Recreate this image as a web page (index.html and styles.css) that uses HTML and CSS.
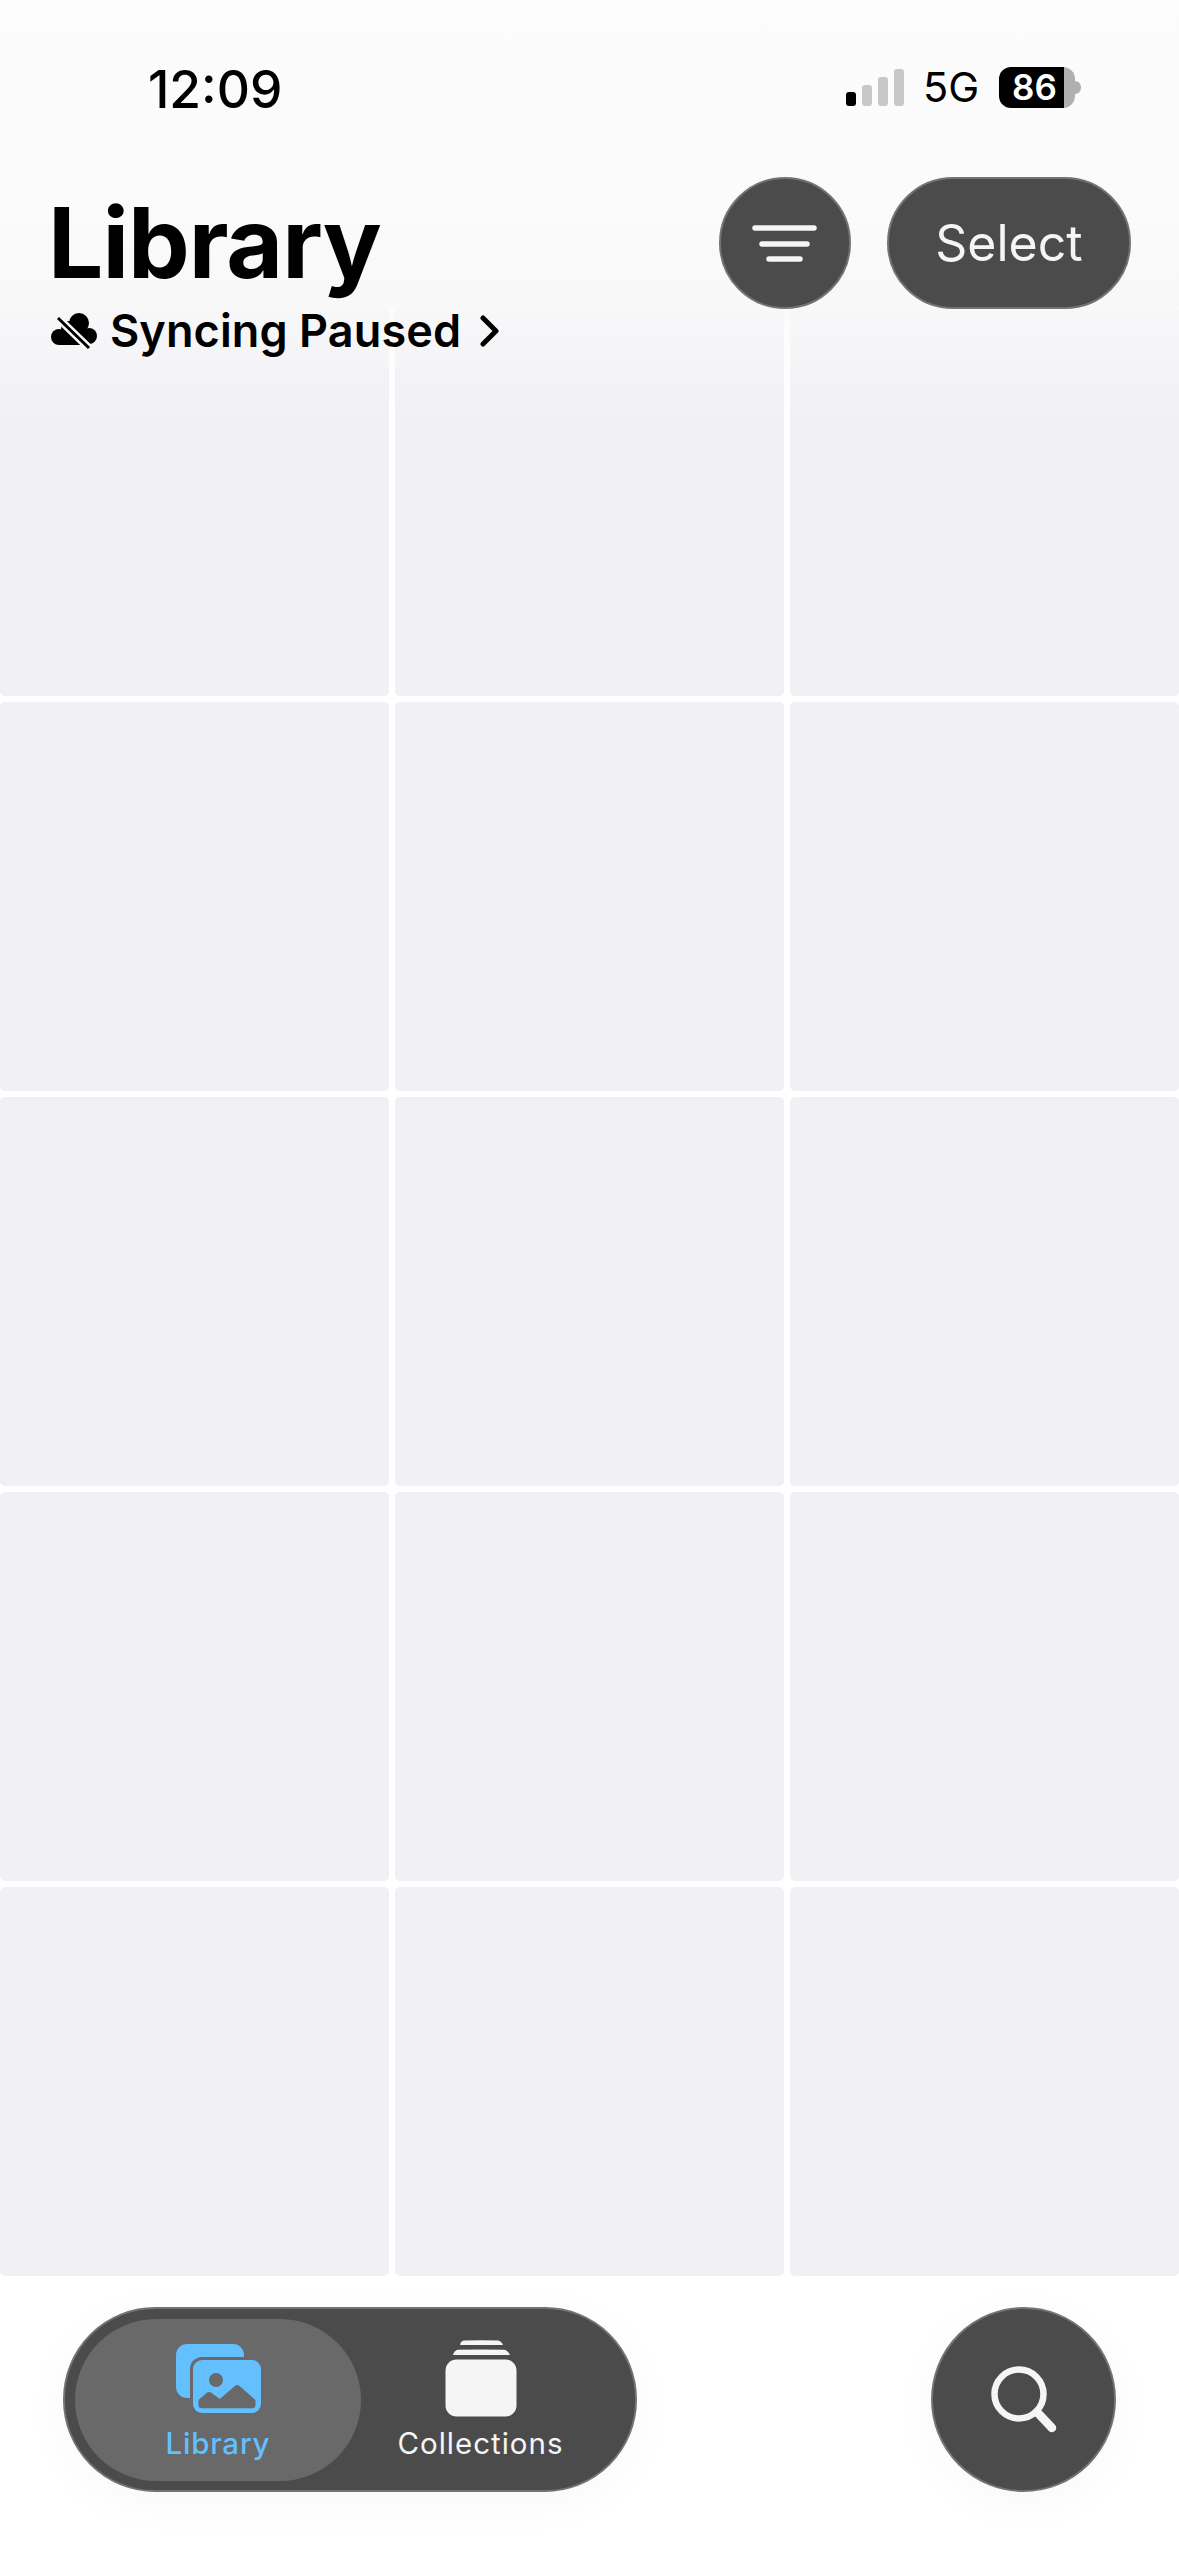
FILE: index.html
```html
<!DOCTYPE html>
<html lang="en">
<head>
<meta charset="utf-8">
<title>Library</title>
<link rel="stylesheet" href="styles.css">
</head>
<body>
<div class="screen">
  <header class="top">
    <div class="status">
      <span class="time">12:09</span>
      <div class="status-right">
        <div class="signal">
          <i class="bar b1 on"></i><i class="bar b2"></i><i class="bar b3"></i><i class="bar b4"></i>
        </div>
        <span class="net">5G</span>
        <div class="battery"><div class="cell"><span>86</span></div><i class="nub"></i></div>
      </div>
    </div>
    <div class="head">
      <div class="titles">
        <h1>Library</h1>
        <div class="sync">
          <svg class="cloud" viewBox="0 0 46 36" width="46" height="36">
            <g fill="#000"><circle cx="8" cy="24" r="8"/><circle cx="18" cy="16" r="8"/><circle cx="28" cy="10" r="10"/><circle cx="38" cy="23" r="8"/><rect x="8" y="18" width="30" height="14"/></g>
            <path d="M7 5 L38 35" stroke="#fafafa" stroke-width="8" fill="none"/>
            <path d="M7 5 L38 35" stroke="#000" stroke-width="3" fill="none"/>
          </svg>
          <span>Syncing Paused</span>
          <svg class="chev" viewBox="0 0 19 32" width="19" height="32"><path d="M3 3 L16 16 L3 29" fill="none" stroke="#000" stroke-width="5" stroke-linecap="round" stroke-linejoin="round"/></svg>
        </div>
      </div>
      <div class="actions">
        <button class="glass round filter" aria-label="Filter">
          <svg viewBox="0 0 65 37" width="65" height="37"><g stroke="#f5f5f5" stroke-width="5.5" stroke-linecap="round"><path d="M3 3H62"/><path d="M10 19H55"/><path d="M17 34H48"/></g></svg>
        </button>
        <button class="glass select">Select</button>
      </div>
    </div>
  </header>

  <main class="grid">
    <div class="fade"></div>
    <div class="tile"></div><div class="tile"></div><div class="tile"></div>
    <div class="tile"></div><div class="tile"></div><div class="tile"></div>
    <div class="tile"></div><div class="tile"></div><div class="tile"></div>
    <div class="tile"></div><div class="tile"></div><div class="tile"></div>
    <div class="tile"></div><div class="tile"></div><div class="tile"></div>
  </main>

  <footer class="bottom">
    <nav class="glass tabbar">
      <div class="tab active">
        <svg viewBox="0 0 85 69" width="85" height="69">
          <rect x="0" y="0" width="68" height="54" rx="11" fill="#64bfff"/>
          <rect x="14" y="13" width="73" height="60" rx="12" fill="#696969"/>
          <rect x="17" y="16" width="68" height="53" rx="9" fill="#64bfff"/>
          <circle cx="40" cy="36" r="7" fill="#696969"/>
          <path d="M22.5 56 L31 48.5 Q33 47.5 35 48.5 L43.7 55 L59.5 41.5 Q61.3 40.5 63 41.5 L79.5 56 V61 Q79.5 64.3 76 64.3 H26 Q22.5 64.3 22.5 61 Z" fill="#696969"/>
        </svg>
        <span>Library</span>
      </div>
      <div class="tab stack">
        <svg viewBox="0 0 72 77" width="72" height="77">
          <path d="M15 5 Q15.5 1 19 0.5 Q36 -0.2 53 0.5 Q56.5 1 58 5 Z" fill="#f5f5f5"/>
          <path d="M8 15 Q9 10.5 13 9.8 Q36 9 59 9.8 Q63 10.5 65 15 Z" fill="#f5f5f5"/>
          <rect x="0.5" y="19.5" width="71" height="57" rx="11" fill="#f5f5f5"/>
        </svg>
        <span>Collections</span>
      </div>
    </nav>
    <button class="glass search" aria-label="Search">
      <svg viewBox="0 0 66 67" width="66" height="67"><circle cx="28" cy="28" r="24.5" fill="none" stroke="#f5f5f5" stroke-width="6.5"/><path d="M46 46 L61 62" stroke="#f5f5f5" stroke-width="8.5" stroke-linecap="round"/></svg>
    </button>
  </footer>
</div>
</body>
</html>
```
FILE: styles.css
```css
* { box-sizing: border-box; }
html, body { margin: 0; padding: 0; background: #fff; }
body { font-family: Inter, "Liberation Sans", sans-serif; color: #000; }
.screen { width: 1179px; height: 2556px; overflow: hidden; display: flex; flex-direction: column; }

.top { height: 307px; flex: none; position: relative; z-index: 2; background: linear-gradient(#fcfcfc 0, #fbfbfb 200px, #f8f8f9 307px); }

.status { height: 177px; padding: 63px 98px 0 148px; display: flex; justify-content: space-between; align-items: flex-start; }
.time { font-size: 51.5px; line-height: 52px; font-weight: 500; }
.status-right { display: flex; align-items: center; height: 41px; margin-top: 4px; }
.signal { display: flex; align-items: flex-end; gap: 6px; height: 37px; width: 58px; }
.bar { width: 10px; border-radius: 3px; background: #c8c8c8; display: block; }
.bar.on { background: #000; }
.b1 { height: 14px; } .b2 { height: 21px; } .b3 { height: 29px; } .b4 { height: 37px; }
.net { font-size: 41.5px; line-height: 41px; margin-left: 19px; width: 55px; }
.battery { display: flex; align-items: center; margin-left: 21px; }
.cell { width: 76px; height: 41px; border-radius: 12px; background: linear-gradient(90deg, #000 65px, #b0b0b0 65px); color: #fff; font-size: 35px; font-weight: 600; line-height: 41px; padding-left: 13px; }
.nub { width: 6px; height: 13px; background: #b0b0b0; border-radius: 0 7px 7px 0; display: block; }

.head { display: flex; justify-content: space-between; padding: 0 48px 0 49px; }
.titles { display: flex; flex-direction: column; }
h1 { margin: 0 0 0 -1px; font-size: 98px; line-height: 132px; font-weight: 700; letter-spacing: -1px; }
.sync { display: flex; align-items: center; height: 44px; padding-left: 2px; }
.sync span { font-size: 45px; font-weight: 600; line-height: 44px; margin-left: 13px; letter-spacing: .1px; }
.chev { margin-left: 19px; }

.glass { background: #4b4b4b; border: 2px solid #737373; color: #f5f5f5; font-family: inherit; padding: 0; display: flex; align-items: center; justify-content: center; }
.actions { display: flex; gap: 36px; height: 132px; }
.round { width: 132px; height: 132px; border-radius: 50%; }
.filter svg { margin-left: -2px; }
.select { width: 244px; height: 132px; border-radius: 66px; font-size: 50px; }

.grid { flex: none; position: relative; display: grid; grid-template-columns: repeat(3, 389px); grid-auto-rows: 389px; gap: 6px; }
.tile { background: #f0f0f5; border-radius: 5px; }
.fade { position: absolute; left: 0; right: 0; top: 0; height: 120px; background: linear-gradient(rgba(250,250,251,.8), rgba(250,250,251,.5) 45px, rgba(250,250,251,0)); }

.bottom { display: flex; justify-content: space-between; align-items: flex-start; padding: 31px 63px 0; }
.tabbar { width: 574px; height: 185px; border-radius: 92px; padding: 0 35px 0 10px; justify-content: flex-start; box-shadow: 0 10px 50px rgba(0,0,0,.03); }
.tab { width: 240px; height: 162px; padding-top: 21px; display: flex; flex-direction: column; align-items: center; color: #f5f5f5; }
.tab svg { display: block; margin-bottom: 8px; }
.tab span { font-size: 29.5px; line-height: 36px; font-weight: 400; letter-spacing: 1px; }
.stack svg { margin-left: 2px; }
.tab.active { width: 287px; padding-top: 25px; border-radius: 81px; background: #696969; color: #64bfff; }
.tab.active span { font-weight: 500; letter-spacing: .8px; }
.tab.active svg { margin: 0 0 12px 2px; }
.search { width: 185px; height: 185px; border-radius: 50%; box-shadow: 0 10px 50px rgba(0,0,0,.03); }
```
